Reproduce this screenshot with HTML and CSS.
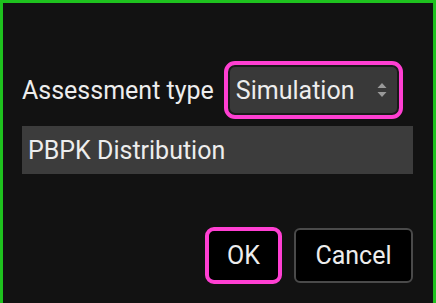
FILE: index.html
```html
<!DOCTYPE html>
<html>
<head>
<meta charset="utf-8">
<link rel="stylesheet" href="styles.css">
</head>
<body>
<div class="dialog">
  <div class="row">
    <span class="label">Assessment type</span>
    <div class="select">
      <span class="select-text">Simulation</span>
      <svg class="arrows" width="12" height="20" viewBox="0 0 12 20">
        <path d="M1.5 8 L6 3 L10.5 8 Z" fill="#9a9a9a"/>
        <path d="M1.5 12 L6 17 L10.5 12 Z" fill="#9a9a9a"/>
      </svg>
    </div>
  </div>
  <div class="field">PBPK Distribution</div>
  <div class="buttons">
    <div class="btn ok">OK</div>
    <div class="btn cancel">Cancel</div>
  </div>
</div>
</body>
</html>
```
FILE: styles.css
```css
html, body {
  margin: 0;
  padding: 0;
  background: #111111;
}
.dialog {
  box-sizing: border-box;
  width: 436px;
  height: 303px;
  border: 3px solid #1ec21e;
  border-bottom: none;
  background: #121212;
  padding: 58px 20px 0 19px;
  font-family: Roboto, "Liberation Sans", sans-serif;
  color: #ededed;
  display: flex;
  flex-direction: column;
}
.row {
  display: flex;
  align-items: center;
  gap: 10px;
  height: 58px;
}
.label {
  font-size: 25px;
}
.select {
  box-sizing: border-box;
  width: 179px;
  height: 58px;
  border: 4px solid #ff3fd2;
  border-radius: 11px;
  background: #393939;
  box-shadow: inset 0 0 0 2px #1a1a1a;
  display: flex;
  align-items: center;
  justify-content: space-between;
  padding: 0 11px 0 8px;
}
.select-text {
  font-size: 25px;
}
.field {
  margin-top: 7px;
  height: 48px;
  background: #3c3c3c;
  font-size: 25px;
  display: flex;
  align-items: center;
  padding-left: 6px;
}
.buttons {
  margin-top: 53px;
  display: flex;
  justify-content: flex-end;
  gap: 12px;
}
.btn {
  box-sizing: border-box;
  height: 57px;
  display: flex;
  align-items: center;
  justify-content: center;
  font-size: 25px;
  background: #000;
}
.ok {
  width: 77px;
  border: 4px solid #ff3fd2;
  border-radius: 9px;
}
.cancel {
  width: 119px;
  height: 55px;
  margin-top: 1px;
  border: 2px solid #4a4a4a;
  border-radius: 6px;
}
```
